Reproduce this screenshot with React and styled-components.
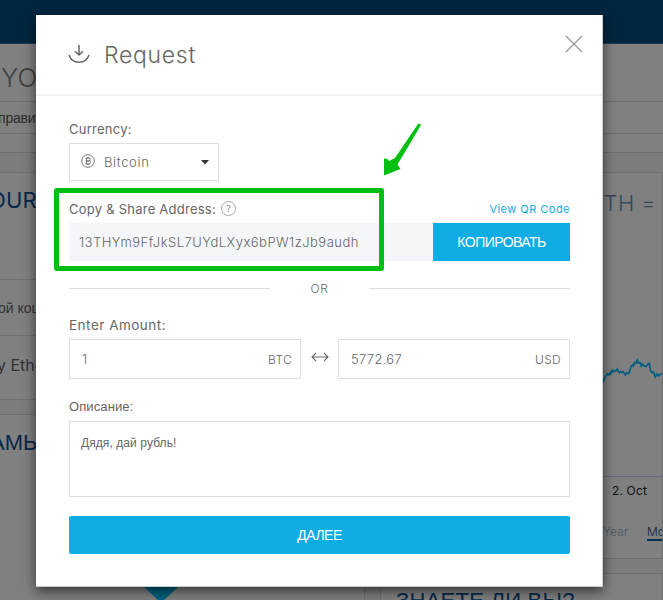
import React from 'react';
import styled, { createGlobalStyle } from 'styled-components';

const Global = createGlobalStyle`
  * { box-sizing: border-box; }
  body { margin: 0; overflow: hidden; background: #808080; font-family: Inter, "Liberation Sans", sans-serif; }
  button { margin: 0; border-radius: 0; }
`;

const cyr = '"Liberation Sans", Arial, sans-serif';

const Page = styled.div`
  position: relative;
  width: 663px;
  height: 600px;
  overflow: hidden;
  background: #7d7d7d;
`;
const TopBar = styled.div`
  height: 44px;
  background: #002640;
  border-bottom: 1px solid #1b3a51;
`;
const Hero = styled.div`
  height: 57px;
  background: #808080;
  padding: 21px 0 0 1px;
  font-size: 26px;
  font-weight: 300;
  line-height: 26px;
  color: #3f4042;
`;
const NavTabs = styled.div`
  display: flex;
  align-items: center;
  height: 33px;
  border: solid #6e6e6e;
  border-width: 1px 0;
  background: #808080;
  font: 14px/30px ${cyr};
  text-indent: -2px;
  letter-spacing: -0.2px;
  color: #2b2b2b;
`;
const BalanceBar = styled.div`
  height: 19px;
  border-bottom: 1px solid #6e6e6e;
  background: #808080;
`;
const Columns = styled.div`
  display: grid;
  grid-template-columns: 365px 283px;
  column-gap: 15px;
  margin-top: 19px;
`;
const Column = styled.div`
  display: flex;
  flex-direction: column;
  gap: 14px;
`;
const Panel = styled.section`
  height: ${p => p.$h}px;
  border: 1px solid #6e6e6e;
  border-left-width: ${p => (p.$flush ? 0 : 1)}px;
  background: #808080;
  overflow: hidden;
`;
const PanelTitle = styled.h2`
  margin: 0;
  height: ${p => p.$h}px;
  padding: ${p => p.$pad};
  font-family: ${p => (p.$cyr ? cyr : 'inherit')};
  font-size: 22px;
  line-height: 24px;
  font-weight: ${p => p.$weight || 400};
  letter-spacing: ${p => p.$ls || 0}px;
  text-indent: ${p => p.$indent || 0}px;
  white-space: nowrap;
  color: ${p => p.$color || '#06294a'};
`;
const ListRow = styled.div`
  display: flex;
  align-items: center;
  height: ${p => p.$h}px;
  border-top: 1px solid #6e6e6e;
  font-family: ${p => (p.$cyr ? cyr : 'inherit')};
  font-size: ${p => (p.$cyr ? 14 : 16)}px;
  text-indent: ${p => p.$indent}px;
  white-space: nowrap;
  color: #333;
`;
const Diamond = styled.svg`
  display: block;
  margin: 130px 0 0 141px;
`;
const Chart = styled.svg`
  display: block;
  margin-left: 221px;
`;
const Axis = styled.div`
  height: 36px;
  border-top: 1px solid #606a7c;
  padding: 6px 0 0 231px;
  font-size: 12px;
  line-height: 15px;
  letter-spacing: 0.15px;
  color: #111;
`;
const Ranges = styled.div`
  display: flex;
  gap: 19px;
  padding: 12px 0 0 222px;
  font-size: 12px;
  font-weight: 300;
  line-height: 15px;
`;
const Range = styled.span`
  height: 17px;
  color: ${p => (p.$on ? '#0b2338' : '#4b5a66')};
  border-bottom: ${p => (p.$on ? '2px solid #00314f' : 'none')};
`;

const Modal = styled.div`
  position: absolute;
  left: 36px;
  top: 15px;
  width: 567px;
  height: 572px;
  background: #fff;
  border: solid #c9cccd;
  border-width: 0 1px 1px 0;
  box-shadow: 0 4px 12px rgba(0, 0, 0, 0.6);
  color: #666;
`;
const ModalHeader = styled.header`
  display: flex;
  align-items: center;
  height: 81px;
  padding: 0 19px 0 32px;
  border-bottom: 2px solid #f1f1f1;
`;
const Title = styled.h1`
  flex: 1;
  margin: 0 0 0 14px;
  font-size: 23px;
  font-weight: 300;
  line-height: 30px;
  letter-spacing: 0.7px;
`;
const Close = styled.button`
  display: flex;
  padding: 0;
  border: 0;
  background: none;
  margin-top: -22px;
`;
const Body = styled.form`
  padding: 24px 32px 0 33px;
`;
const LabelRow = styled.div`
  display: flex;
  align-items: center;
  height: 18px;
  margin-top: ${p => p.$mt || 0}px;
  margin-bottom: 5px;
`;
const Label = styled.label`
  font-family: ${p => (p.$cyr ? cyr : 'inherit')};
  font-size: ${p => p.$size || 13}px;
  font-weight: 400;
  letter-spacing: ${p => p.$ls || 0}px;
  line-height: 18px;
  white-space: nowrap;
`;
const Help = styled.span`
  display: grid;
  place-items: center;
  width: 15px;
  height: 15px;
  margin: -2px 0 0 5px;
  border: 1px solid #aaa;
  border-radius: 50%;
  font-size: 9px;
  font-weight: 300;
  line-height: 13px;
`;
const QrLink = styled.a`
  margin-left: auto;
  font-size: 11px;
  letter-spacing: 0.47px;
  color: #10ade4;
  white-space: nowrap;
`;
const Select = styled.div`
  display: flex;
  align-items: center;
  width: 150px;
  height: 38px;
  padding: 0 9px 0 11px;
  border: 1px solid #dedede;
`;
const SelectText = styled.span`
  flex: 1;
  margin-left: 9px;
  font-size: 13px;
  font-weight: 300;
  letter-spacing: 0.65px;
`;
const AddressRow = styled.div`
  display: flex;
  height: 38px;
`;
const Address = styled.div`
  flex: 1;
  padding-left: 10px;
  background: #f5f6f9;
  font-size: 13px;
  font-weight: 300;
  line-height: 38px;
  letter-spacing: 0.48px;
`;
const Copy = styled.button`
  width: 137px;
  padding: 0;
  border: 0;
  background: #10ade4;
  color: #fff;
  font: 14px/36px ${cyr};
  letter-spacing: -0.55px;
`;
const Divider = styled.div`
  display: flex;
  align-items: center;
  height: 20px;
  margin-top: 17px;
  &::before, &::after { content: ''; width: 201px; height: 1px; background: #dedede; }
`;
const Or = styled.span`
  flex: 1;
  text-align: center;
  font-size: 12px;
  font-weight: 300;
  letter-spacing: 0.6px;
`;
const Amounts = styled.div`
  display: flex;
  justify-content: space-between;
  align-items: center;
`;
const Amount = styled.div`
  display: flex;
  justify-content: space-between;
  align-items: center;
  width: 232px;
  height: 40px;
  padding: 0 8px 0 12px;
  border: 1px solid #dedede;
  font-size: 13px;
  font-weight: 300;
  letter-spacing: 0.3px;
`;
const Unit = styled.span`
  font-size: 12px;
`;
const Note = styled.div`
  height: 76px;
  padding: 13px 11px;
  border: 1px solid #dedede;
  font: 12px/16px ${cyr};
  letter-spacing: 0.08px;
`;
const Next = styled.button`
  display: block;
  width: 100%;
  height: 38px;
  margin-top: 19px;
  padding: 0;
  border: 0;
  && { border-radius: 2px; }
  background: #10ade4;
  color: #fff;
  font: 14px/36px ${cyr};
  letter-spacing: -0.5px;
`;
const Highlight = styled.div`
  position: absolute;
  left: 54px;
  top: 188px;
  width: 330px;
  height: 83px;
  border: 5px solid #02bf12;
  border-radius: 3px;
`;
const Arrow = styled.svg`
  position: absolute;
  left: 380px;
  top: 120px;
`;

const RequestIcon = () => (
  <svg width="22" height="22" viewBox="0 0 22 22" fill="none" stroke="#666" strokeWidth="1.5">
    <path d="M11 1v10M7 7.300 11 11l4-3.700M1 11c1.600 4.700 5.400 7.300 10 7.300s8.400-2.600 10-7.300" />
  </svg>
);

const BitcoinIcon = () => (
  <svg width="14" height="16" viewBox="0 0 14 16" fill="none" stroke="#666" strokeWidth=".9">
    <circle cx="7" cy="7" r="6.300" />
    <path d="M4.500 4.200h3.300a1.350 1.350 0 0 1 0 2.700H5.300h2.800a1.500 1.500 0 0 1 0 3H4.500M5.400 4.200v5.700M6.400 3v1.200M7.700 3v1.200M6.400 9.900v1.200M7.700 9.900v1.200" />
  </svg>
);

export default function App() {
  return (
    <>
      <Global />
      <Page>
        <TopBar />
        <Hero>YO</Hero>
        <NavTabs>правит</NavTabs>
        <BalanceBar />
        <Columns>
          <Column>
            <Panel $h={228} $flush>
              <PanelTitle $h={106} $pad="15px 0 0 0" $ls={0.2} $indent={-11}>OUR</PanelTitle>
              <ListRow $h={56} $cyr $indent={-2}>ой кош</ListRow>
              <ListRow $h={59} $indent={-3}>y Ethe</ListRow>
            </Panel>
            <Panel $h={250} $flush>
              <PanelTitle $h={30} $pad="16px 0 0 0" $cyr $indent={-10}>АМЫ</PanelTitle>
              <Diamond width="40" height="27" viewBox="0 0 40 27">
                <path d="M20 0 39 10 22 26q-2 2-4 0L1 10Z" fill="#00607f" />
              </Diamond>
            </Panel>
          </Column>
          <Column>
            <Panel $h={387}>
              <PanelTitle $h={174} $pad="18px 0 0 209px" $color="#34495c" $weight={300} $ls={0.4}>ETH =</PanelTitle>
              <Chart width="62" height="129" viewBox="0 0 62 129">
                <path
                  d="M.7 36 2.700 31 4 29 5.300 27 6.500 28 8 26 8.500 27 10 23.500 11 25 12 23.500 13.500 24 15.300 22 16 24 17.300 25.500 18.500 24.500 20 25.500 21 24.500 22 26 23.300 28 24.500 26 26 26.500 27.500 25 28.700 20 30.700 18 31.500 19 32.700 15.500 34 16 35.300 13 36.500 16 38 15.500 39.300 19 40.500 17 42 19 44 19.500 46 17 47.300 16.500 48.700 24 50 25.500 51.500 25 53.300 30 55 27 56.500 29 58 27.500 59.300 27 61 26"
                  fill="none" stroke="#00607f" strokeWidth="1.700" />
              </Chart>
              <Axis>2. Oct</Axis>
              <Ranges>
                <Range>Year</Range>
                <Range $on>Mo</Range>
              </Ranges>
            </Panel>
            <Panel $h={100}>
              <PanelTitle $h={40} $pad="15px 0 0 15px" $cyr $ls={0.25}>ЗНАЕТЕ ЛИ ВЫ?</PanelTitle>
            </Panel>
          </Column>
        </Columns>

        <Modal>
          <ModalHeader>
            <RequestIcon />
            <Title>Request</Title>
            <Close type="button" aria-label="Close">
              <svg width="18" height="18" viewBox="0 0 18 18" stroke="#999" strokeWidth="1.200">
                <path d="m1 1 16 16M17 1 1 17" />
              </svg>
            </Close>
          </ModalHeader>
          <Body>
            <LabelRow><Label $ls={0.25}>Currency:</Label></LabelRow>
            <Select>
              <BitcoinIcon />
              <SelectText>Bitcoin</SelectText>
              <svg width="8" height="5" viewBox="0 0 8 5"><path d="M0 0h8L4 4.500z" fill="#333" /></svg>
            </Select>
            <LabelRow $mt={19}>
              <Label $ls={0.24}>Copy &amp; Share Address:</Label>
              <Help>?</Help>
              <QrLink>View QR Code</QrLink>
            </LabelRow>
            <AddressRow>
              <Address>13THYm9FfJkSL7UYdLXyx6bPW1zJb9audh</Address>
              <Copy type="button">КОПИРОВАТЬ</Copy>
            </AddressRow>
            <Divider><Or>OR</Or></Divider>
            <LabelRow $mt={18}><Label $size={13.5} $ls={0.5}>Enter Amount:</Label></LabelRow>
            <Amounts>
              <Amount><span>1</span><Unit>BTC</Unit></Amount>
              <svg width="18" height="14" viewBox="0 0 18 14" fill="none" stroke="#666" strokeWidth="1.100">
                <path d="M1 5h16M5 1 1 5l4 4M13 1l4 4-4 4" />
              </svg>
              <Amount><span>5772.67</span><Unit>USD</Unit></Amount>
            </Amounts>
            <LabelRow $mt={19}><Label $cyr $ls={0.1}>Описание:</Label></LabelRow>
            <Note>Дядя, дай рубль!</Note>
            <Next type="button">ДАЛЕЕ</Next>
          </Body>
        </Modal>
        <Highlight />
        <Arrow width="44" height="60" viewBox="0 0 44 60">
          <path d="M38 4q2-1 3 1L17.500 44.500l3 4.500L4 55.500 4 38.500l3 .2 2 2.300 6-3Z" fill="#02bf12" />
        </Arrow>
      </Page>
    </>
  );
}
